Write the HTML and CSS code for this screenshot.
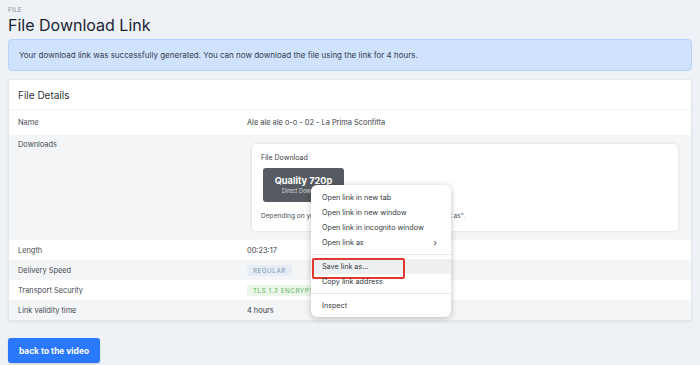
FILE: index.html
```html
<!DOCTYPE html>
<html lang="en">
<head>
    <meta charset="UTF-8">
    <meta name="viewport" content="width=device-width, initial-scale=1.0">
    <title>File Download Link</title>
    <link rel="stylesheet" href="styles.css">
</head>
<body>
    <div class="page">
        <div class="eyebrow">FILE</div>
        <h1 class="page-title">File Download Link</h1>

        <div class="alert">
            Your download link was successfully generated. You can now download the file using the link for 4 hours.
        </div>

        <section class="card">
            <div class="card-header">File Details</div>

            <div class="row">
                <div class="row-label">Name</div>
                <div class="row-value">Ale ale ale o-o - 02 - La Prima Sconfitta</div>
            </div>

            <div class="row row-alt row-downloads">
                <div class="row-label">Downloads</div>
                <div class="row-value">
                    <div class="download-box">
                        <div class="download-title">File Download</div>
                        <a href="#" class="quality-btn">
                            <span class="quality-name">Quality 720p</span>
                            <span class="quality-sub">Direct Download</span>
                        </a>
                        <p class="download-note">Depending on your browser, you may need to click "Save link as".</p>

                        <!-- Browser context menu -->
                        <ul class="context-menu">
                            <li>Open link in new tab</li>
                            <li>Open link in new window</li>
                            <li>Open link in incognito window</li>
                            <li class="has-sub">Open link as <span class="chev">&#8250;</span></li>
                            <li class="sep"></li>
                            <li class="active">Save link as...</li>
                            <li>Copy link address</li>
                            <li class="sep"></li>
                            <li>Inspect</li>
                        </ul>
                    </div>
                </div>
            </div>

            <div class="row">
                <div class="row-label">Length</div>
                <div class="row-value">00:23:17</div>
            </div>

            <div class="row row-alt">
                <div class="row-label">Delivery Speed</div>
                <div class="row-value"><span class="badge badge-blue">REGULAR</span></div>
            </div>

            <div class="row">
                <div class="row-label">Transport Security</div>
                <div class="row-value"><span class="badge badge-green">TLS 1.3 ENCRYPTION</span></div>
            </div>

            <div class="row row-alt">
                <div class="row-label">Link validity time</div>
                <div class="row-value">4 hours</div>
            </div>
        </section>

        <a href="#" class="back-btn">back to the video</a>
    </div>
</body>
</html>
```

FILE: styles.css
```css
* {
    margin: 0;
    padding: 0;
    box-sizing: border-box;
}

body {
    background-color: #eef1f5;
    color: #3a4047;
    font-family: Inter, "Liberation Sans", sans-serif;
    min-height: 100vh;
}

.page {
    padding: 6px 8px 0 8px;
}

.eyebrow {
    font-size: 6.5px;
    line-height: 8px;
    color: #8a939d;
    letter-spacing: 0.2px;
}

.page-title {
    font-size: 16px;
    font-weight: 400;
    line-height: 20px;
    color: #1b2433;
    margin: 1px 0 4px 0;
}

/* Success alert */
.alert {
    background: #cfe2fe;
    border: 1px solid #b8d3fb;
    border-radius: 4px;
    padding: 9px 10px;
    font-size: 8px;
    line-height: 12px;
    color: #34404c;
}

/* Details card */
.card {
    margin-top: 8px;
    background: #fff;
    border: 1px solid #e4e8ec;
    border-radius: 2px;
    box-shadow: 0 1px 2px rgba(0, 0, 0, 0.08);
}

.card-header {
    height: 30px;
    padding: 0 9px;
    display: flex;
    align-items: center;
    font-size: 10px;
    color: #2e343b;
    border-bottom: 1px solid #f0f2f4;
}

.row {
    display: grid;
    grid-template-columns: 229px 1fr;
    align-items: center;
    height: 20px;
    padding: 0 9px;
    font-size: 7.4px;
}

.row:nth-child(2) {
    height: 25px;
}

.row-alt {
    background: #f4f5f7;
}

.row-label {
    color: #454b52;
}

.row-value {
    color: #3a3f45;
}

/* Downloads row */
.row-downloads {
    height: auto;
    align-items: start;
    padding-top: 5px;
    padding-bottom: 9px;
}

.row-downloads .row-label {
    line-height: 10px;
}

.download-box {
    position: relative;
    margin: 4px 4px 0 5px;
    background: #fff;
    border-radius: 4px;
    box-shadow: 0 0 3px rgba(0, 0, 0, 0.12);
    padding: 9px 9px 10px 9px;
    height: 87px;
}

.download-title {
    font-size: 7px;
    color: #3b4046;
    line-height: 10px;
}

.quality-btn {
    display: flex;
    flex-direction: column;
    align-items: center;
    justify-content: center;
    width: 81px;
    height: 34px;
    margin: 5px 0 0 2px;
    background: #565b61;
    border-radius: 3px;
    color: #fff;
    text-decoration: none;
}

.quality-name {
    font-size: 9.2px;
    font-weight: 700;
    line-height: 12px;
}

.quality-sub {
    font-size: 5.5px;
    color: #d6d9dc;
    line-height: 8px;
}

.download-note {
    margin-top: 9px;
    font-size: 6.6px;
    color: #4a5057;
    line-height: 10px;
}

/* Context menu over the download box */
.context-menu {
    position: absolute;
    left: 59px;
    top: 41px;
    width: 140px;
    list-style: none;
    background: #fff;
    border-radius: 6px;
    box-shadow: 0 1px 6px rgba(0, 0, 0, 0.25);
    padding: 5px 0 4px 0;
    font-size: 7.2px;
    color: #33373c;
    z-index: 2;
}

.context-menu li {
    height: 15px;
    line-height: 15px;
    padding: 0 11px;
    position: relative;
}

.context-menu .has-sub .chev {
    position: absolute;
    right: 14px;
    font-size: 9px;
}

.context-menu .sep {
    height: 9px;
    padding: 0;
}

.context-menu .sep::after {
    content: '';
    position: absolute;
    left: 0;
    right: 0;
    top: 4px;
    height: 1px;
    background: #e6e7e9;
}

.context-menu .active {
    background: #eeeff1;
}

.context-menu .active::after {
    content: '';
    position: absolute;
    left: 1px;
    top: -1px;
    width: 89px;
    height: 17px;
    border: 2px solid #e2382f;
    border-radius: 2px;
}

/* Badges */
.badge {
    display: inline-block;
    font-size: 6.2px;
    letter-spacing: 0.6px;
    line-height: 11px;
    padding: 0 6px;
    border-radius: 2px;
}

.badge-blue {
    background: #e6edf6;
    color: #7892b0;
}

.badge-green {
    background: #e9f6e8;
    color: #66b266;
}

.back-btn {
    display: inline-flex;
    align-items: center;
    justify-content: center;
    margin-top: 17px;
    width: 92px;
    height: 25px;
    background: #2a78fc;
    color: #fff;
    border-radius: 3px;
    font-size: 8.4px;
    font-weight: 700;
    text-decoration: none;
    box-shadow: 0 1px 2px rgba(0, 0, 0, 0.15);
}
```
